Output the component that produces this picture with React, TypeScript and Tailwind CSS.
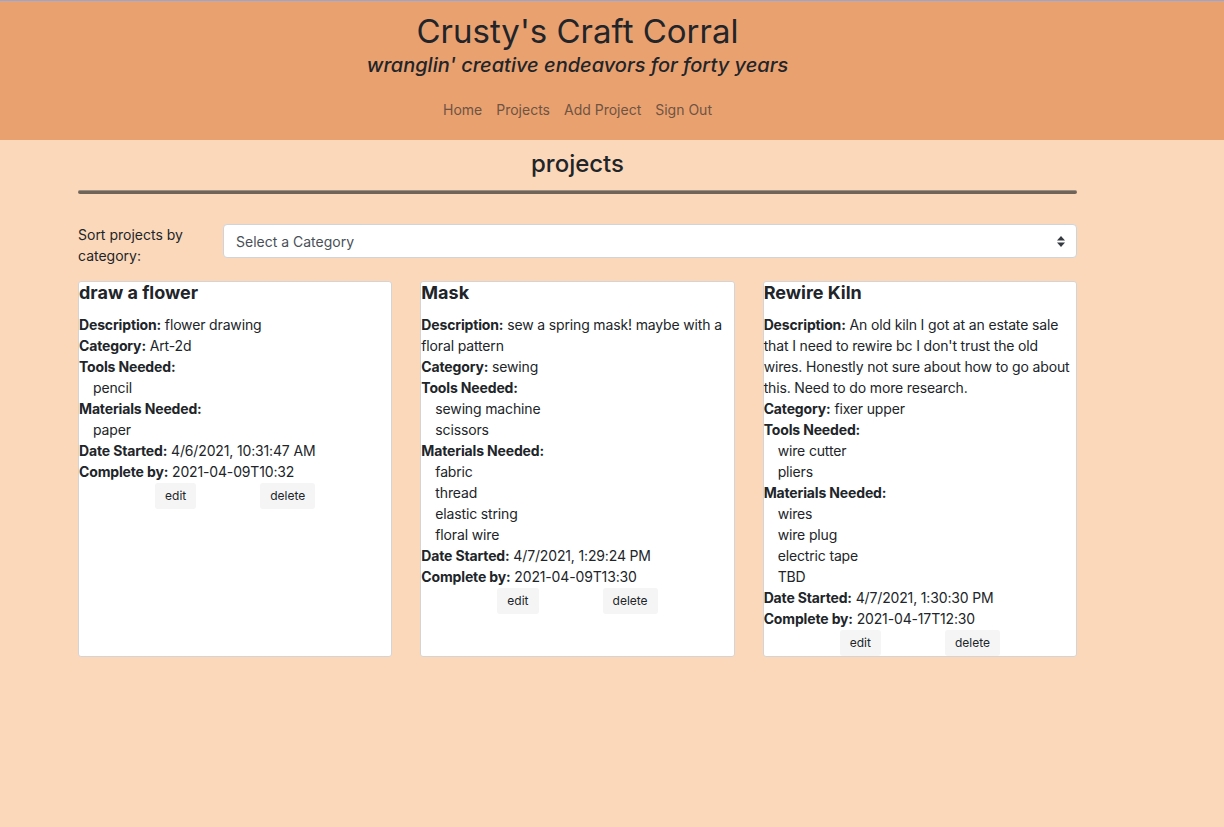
import React from 'react';

type Project = {
  name: string;
  description: string;
  category: string;
  tools: string[];
  materials: string[];
  started: string;
  completeBy: string;
};

const projects: Project[] = [
  {
    name: 'draw a flower',
    description: 'flower drawing',
    category: 'Art-2d',
    tools: ['pencil'],
    materials: ['paper'],
    started: '4/6/2021, 10:31:47 AM',
    completeBy: '2021-04-09T10:32',
  },
  {
    name: 'Mask',
    description: 'sew a spring mask! maybe with a floral pattern',
    category: 'sewing',
    tools: ['sewing machine', 'scissors'],
    materials: ['fabric', 'thread', 'elastic string', 'floral wire'],
    started: '4/7/2021, 1:29:24 PM',
    completeBy: '2021-04-09T13:30',
  },
  {
    name: 'Rewire Kiln',
    description:
      "An old kiln I got at an estate sale that I need to rewire bc I don't trust the old wires. Honestly not sure about how to go about this. Need to do more research.",
    category: 'fixer upper',
    tools: ['wire cutter', 'pliers'],
    materials: ['wires', 'wire plug', 'electric tape', 'TBD'],
    started: '4/7/2021, 1:30:30 PM',
    completeBy: '2021-04-17T12:30',
  },
];

function ProjectCard({ project }: { project: Project }) {
  return (
    <div className="flex flex-col rounded-[3px] border border-[#d4d4d4] bg-white">
      <h3 className="mb-[10px] text-[18px] font-bold leading-[22px]">{project.name}</h3>
      <div className="text-[14px] leading-[21px] tracking-[-0.15px]">
        <p>
          <b>Description:</b> {project.description}
        </p>
        <p>
          <b>Category:</b> {project.category}
        </p>
        <p className="font-bold">Tools Needed:</p>
        <ul className="pl-[14px]">
          {project.tools.map((t) => (
            <li key={t}>{t}</li>
          ))}
        </ul>
        <p className="font-bold">Materials Needed:</p>
        <ul className="pl-[14px]">
          {project.materials.map((m) => (
            <li key={m}>{m}</li>
          ))}
        </ul>
        <p>
          <b>Date Started:</b> {project.started}
        </p>
        <p>
          <b>Complete by:</b> {project.completeBy}
        </p>
      </div>
      {/* edit / delete buttons */}
      <div className="mt-[0.5px] flex justify-center gap-16">
        <button className="h-[26px] rounded-[3px] bg-[#f5f5f6] px-[10px] text-[12px] text-[#212529]">edit</button>
        <button className="h-[26px] rounded-[3px] bg-[#f5f5f6] px-[10px] text-[12px] text-[#212529]">delete</button>
      </div>
    </div>
  );
}

export default function App() {
  return (
    <div className="min-h-[827px] bg-[#fbd8ba] font-['Inter','Liberation_Sans',sans-serif] text-[#212529]">
      {/* Header */}
      <header className="border-t border-[#8fa8e0] bg-[#eaa170] pt-[9px] pb-[20px]">
        <div className="ml-[78px] flex w-[999px] flex-col items-center">
          <h1 className="text-[33px] leading-[43px]">Crusty's Craft Corral</h1>
          <p className="text-[20px] font-medium italic leading-[24px]">wranglin' creative endeavors for forty years</p>
          <nav className="mt-[22px] flex gap-[14px] text-[14px] leading-[21px] text-[#6e5442]">
            <a>Home</a>
            <a>Projects</a>
            <a>Add Project</a>
            <a>Sign Out</a>
          </nav>
        </div>
      </header>

      <main className="ml-[78px] w-[999px] pt-[9px]">
        <h2 className="text-center text-[24px] font-medium leading-[29px]">projects</h2>
        <div className="mt-[12px] h-[4px] rounded-[2px] border-t border-[#9b8f83] bg-[#6f6457]" />

        {/* Sort row */}
        <div className="mt-[30px] flex items-start">
          <label className="w-[145px] text-[14px] leading-[21px]">Sort projects by category:</label>
          <div className="relative flex h-[34px] flex-1 items-center rounded-[4px] border border-[#ced4da] bg-white pl-[12px] text-[14px] text-[#495057]">
            Select a Category
            <svg className="absolute right-[11px] top-[11px]" width="8" height="11" viewBox="0 0 8 11">
              <path d="M4 0 L8 4.5 H0 Z" fill="#343a40" />
              <path d="M4 11 L8 6.5 H0 Z" fill="#343a40" />
            </svg>
          </div>
        </div>

        {/* Cards */}
        <div className="mt-[15px] grid grid-cols-3 gap-[28px]">
          {projects.map((p) => (
            <ProjectCard key={p.name} project={p} />
          ))}
        </div>
      </main>
    </div>
  );
}
